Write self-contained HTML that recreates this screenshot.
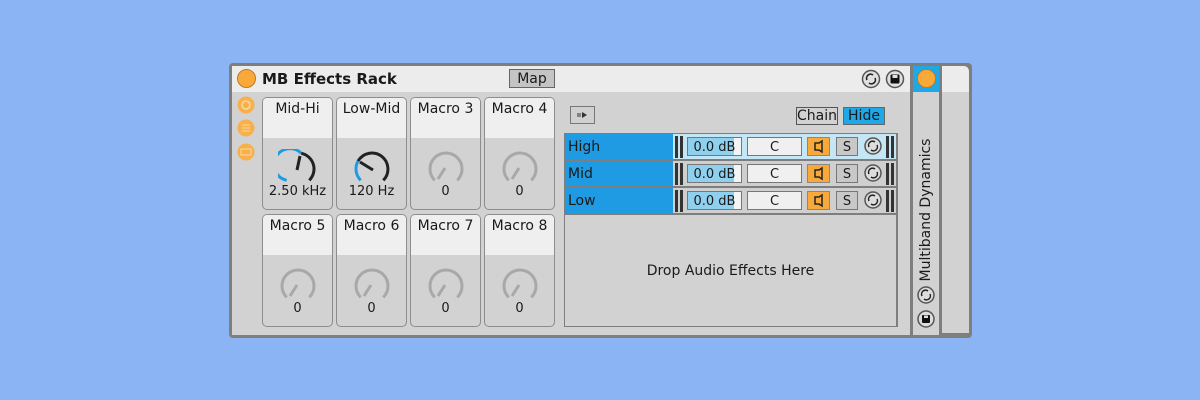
<!DOCTYPE html>
<html><head><meta charset="utf-8"><style>
*{margin:0;padding:0;box-sizing:border-box}
body{width:1200px;height:400px;background:#8ab4f3;position:relative;overflow:hidden;font-family:"DejaVu Sans","Liberation Sans",sans-serif;color:#1a1a1a}
.a{position:absolute}
.card{position:absolute;width:71px;height:113px;border:1.5px solid #8d8d8d;border-radius:5px;background:#d2d2d2;overflow:hidden}
.card .t{height:40px;background:#efefef;text-align:center;font-size:14px;padding-top:3px}
.card svg{position:absolute;left:15px;top:51px}
.card .v{position:absolute;left:0;right:0;top:86px;text-align:center;font-size:13px}
.row{position:absolute;left:565px;width:331px;height:25px}
.nm{position:absolute;left:0;top:0;width:108px;height:25px;background:#1e9be2;font-size:14px;padding:5px 0 0 3px}
.bars{position:absolute;top:2px;width:8px;height:22px;border-left:3px solid #333;border-right:3px solid #333}
.db{position:absolute;left:122px;top:3px;width:55px;height:19px;border:1px solid #777;background:linear-gradient(90deg,#8fd0ef 0 46px,#f4f4f4 46px);font-size:13px;text-align:center;line-height:19px}
.c{position:absolute;left:182px;top:3px;width:55px;height:19px;border:1px solid #777;background:#f0f0f0;font-size:13px;text-align:center;line-height:19px}
.sp{position:absolute;left:242px;top:3px;width:23px;height:19px;background:#f8a93a;border:1px solid #888}
.s{position:absolute;left:271px;top:3px;width:22px;height:19px;background:#c8c8c8;border:1px solid #777;font-size:13px;text-align:center;line-height:19px}
.rf{position:absolute;left:299px;top:3px}
</style></head><body>
<div class="a" style="left:229px;top:63px;width:743px;height:275px;background:#7e7e7e;border-radius:4px"></div>
<div class="a" style="left:232px;top:66px;width:678px;height:26px;background:#ececec"></div>
<div class="a" style="left:232px;top:92px;width:678px;height:243px;background:#d2d2d2"></div>
<div class="a" style="left:913px;top:66px;width:26px;height:26px;background:#1fa8e8"></div>
<div class="a" style="left:913px;top:92px;width:26px;height:243px;background:#d2d2d2"></div>
<div class="a" style="left:942px;top:66px;width:27px;height:26px;background:#ececec;border-top-right-radius:5px"></div>
<div class="a" style="left:942px;top:92px;width:27px;height:241px;background:#d2d2d2"></div>
<div class="a" style="left:917px;top:69px;width:19px;height:19px;border-radius:50%;background:#f8a93a;border:1px solid #c07a20"></div>
<div class="a" style="left:237px;top:69px;width:19px;height:19px;border-radius:50%;background:#f8a93a;border:1px solid #c07a20"></div>
<div class="a" style="left:262px;top:70px;font-size:15px;font-weight:bold">MB Effects Rack</div>
<div class="a" style="left:509px;top:69px;width:46px;height:19px;background:#c4c4c4;border:1px solid #666;font-size:14px;text-align:center;line-height:18px">Map</div>
<svg class="a" style="left:861px;top:69px" width="20" height="20"><circle cx="10" cy="10" r="8.5" fill="#e0e0e0" stroke="#555" stroke-width="1.5"/><path d="M6 11a4 4 0 0 1 6-5M14 9a4 4 0 0 1-6 5" fill="none" stroke="#222" stroke-width="1.6"/></svg>
<svg class="a" style="left:885px;top:69px" width="20" height="20"><circle cx="10" cy="10" r="8.5" fill="#e0e0e0" stroke="#555" stroke-width="1.5"/><rect x="5.5" y="5.5" width="9" height="9" rx="1" fill="#111"/><rect x="7.5" y="6" width="5" height="3" fill="#e0e0e0"/></svg>
<svg class="a" style="left:236px;top:95px" width="20" height="68"><circle cx="10" cy="10" r="8.5" fill="#f8b04a"/><circle cx="10" cy="10" r="4" fill="none" stroke="#fcd9a0" stroke-width="1.5"/><circle cx="10" cy="33" r="8.5" fill="#f8b04a"/><path d="M6 30h8M6 33h8M6 36h8" stroke="#fcd9a0"/><circle cx="10" cy="57" r="8.5" fill="#f8b04a"/><rect x="5" y="54" width="10" height="6" fill="none" stroke="#fcd9a0"/></svg>
<div class="card" style="left:262px;top:97px"><div class="t">Mid-Hi</div>
<svg width="40" height="38"><path d="M8.7 31.3A16 16 0 1 1 23.3 4.3" fill="none" stroke="#1e9be2" stroke-width="3"/><path d="M23.3 4.3A16 16 0 0 1 31.3 31.3" fill="none" stroke="#222" stroke-width="3"/><path d="M19 21L22 7" stroke="#222" stroke-width="3"/></svg><div class="v">2.50 kHz</div></div>
<div class="card" style="left:336px;top:97px"><div class="t">Low-Mid</div>
<svg width="40" height="38"><path d="M8.7 31.3A16 16 0 0 1 6.1 12" fill="none" stroke="#1e9be2" stroke-width="3"/><path d="M6.1 12A16 16 0 1 1 31.3 31.3" fill="none" stroke="#222" stroke-width="3"/><path d="M21 21L8 13" stroke="#222" stroke-width="3"/></svg><div class="v">120 Hz</div></div>
<div class="card" style="left:410px;top:97px"><div class="t">Macro 3</div>
<svg width="40" height="38"><path d="M8.7 31.3A16 16 0 1 1 31.3 31.3" fill="none" stroke="#a8a8a8" stroke-width="3"/><path d="M19 19L12 30" stroke="#a8a8a8" stroke-width="3"/></svg><div class="v">0</div></div>
<div class="card" style="left:484px;top:97px"><div class="t">Macro 4</div>
<svg width="40" height="38"><path d="M8.7 31.3A16 16 0 1 1 31.3 31.3" fill="none" stroke="#a8a8a8" stroke-width="3"/><path d="M19 19L12 30" stroke="#a8a8a8" stroke-width="3"/></svg><div class="v">0</div></div>
<div class="card" style="left:262px;top:214px"><div class="t">Macro 5</div>
<svg width="40" height="38"><path d="M8.7 31.3A16 16 0 1 1 31.3 31.3" fill="none" stroke="#a8a8a8" stroke-width="3"/><path d="M19 19L12 30" stroke="#a8a8a8" stroke-width="3"/></svg><div class="v">0</div></div>
<div class="card" style="left:336px;top:214px"><div class="t">Macro 6</div>
<svg width="40" height="38"><path d="M8.7 31.3A16 16 0 1 1 31.3 31.3" fill="none" stroke="#a8a8a8" stroke-width="3"/><path d="M19 19L12 30" stroke="#a8a8a8" stroke-width="3"/></svg><div class="v">0</div></div>
<div class="card" style="left:410px;top:214px"><div class="t">Macro 7</div>
<svg width="40" height="38"><path d="M8.7 31.3A16 16 0 1 1 31.3 31.3" fill="none" stroke="#a8a8a8" stroke-width="3"/><path d="M19 19L12 30" stroke="#a8a8a8" stroke-width="3"/></svg><div class="v">0</div></div>
<div class="card" style="left:484px;top:214px"><div class="t">Macro 8</div>
<svg width="40" height="38"><path d="M8.7 31.3A16 16 0 1 1 31.3 31.3" fill="none" stroke="#a8a8a8" stroke-width="3"/><path d="M19 19L12 30" stroke="#a8a8a8" stroke-width="3"/></svg><div class="v">0</div></div>
<div class="a" style="left:570px;top:106px;width:25px;height:18px;border:1px solid #777;background:#d0d0d0"><svg width="23" height="16"><path d="M7 6v4M9 6v4" stroke="#333"/><path d="M11 5l5 3-5 3z" fill="#333"/></svg></div>
<div class="a" style="left:796px;top:107px;width:42px;height:18px;border:1px solid #555;font-size:14px;text-align:center;line-height:17px">Chain</div>
<div class="a" style="left:843px;top:107px;width:42px;height:18px;background:#1fa8e8;border:1px solid #666;font-size:14px;text-align:center;line-height:17px">Hide</div>
<div class="a" style="left:564px;top:133px;width:334px;height:194px;background:#7e7e7e"></div>
<div class="a" style="left:565px;top:215px;width:331px;height:111px;background:#d2d2d2;font-size:14px;text-align:center;padding-top:48px">Drop Audio Effects Here</div>
<div class="row" style="top:134px;background:#c4e6f5"><div class="nm">High</div><div class="bars" style="left:110px"></div><div class="db">0.0 dB</div><div class="c">C</div><div class="sp"><svg width="21" height="17"><path d="M7 5h4l3-2v11l-3-2H7z" fill="none" stroke="#222" stroke-width="1.5"/></svg></div><div class="s">S</div><svg class="rf" width="20" height="20"><circle cx="9" cy="9" r="8" fill="#ddd" stroke="#555" stroke-width="1.5"/><path d="M5 10a4 4 0 0 1 6-5M13 8a4 4 0 0 1-6 5" fill="none" stroke="#222" stroke-width="1.5"/></svg><div class="bars" style="left:321px"></div></div>
<div class="row" style="top:161px;background:#cfcfcf"><div class="nm">Mid</div><div class="bars" style="left:110px"></div><div class="db">0.0 dB</div><div class="c">C</div><div class="sp"><svg width="21" height="17"><path d="M7 5h4l3-2v11l-3-2H7z" fill="none" stroke="#222" stroke-width="1.5"/></svg></div><div class="s">S</div><svg class="rf" width="20" height="20"><circle cx="9" cy="9" r="8" fill="#ddd" stroke="#555" stroke-width="1.5"/><path d="M5 10a4 4 0 0 1 6-5M13 8a4 4 0 0 1-6 5" fill="none" stroke="#222" stroke-width="1.5"/></svg><div class="bars" style="left:321px"></div></div>
<div class="row" style="top:188px;background:#cfcfcf"><div class="nm">Low</div><div class="bars" style="left:110px"></div><div class="db">0.0 dB</div><div class="c">C</div><div class="sp"><svg width="21" height="17"><path d="M7 5h4l3-2v11l-3-2H7z" fill="none" stroke="#222" stroke-width="1.5"/></svg></div><div class="s">S</div><svg class="rf" width="20" height="20"><circle cx="9" cy="9" r="8" fill="#ddd" stroke="#555" stroke-width="1.5"/><path d="M5 10a4 4 0 0 1 6-5M13 8a4 4 0 0 1-6 5" fill="none" stroke="#222" stroke-width="1.5"/></svg><div class="bars" style="left:321px"></div></div>
<div class="a" style="left:926px;top:210px;width:0;height:0"><div style="position:absolute;transform:translate(-50%,-50%) rotate(-90deg);white-space:nowrap;font-size:14px">Multiband Dynamics</div></div>
<svg class="a" style="left:916px;top:285px" width="20" height="45"><circle cx="10" cy="10" r="8" fill="#ddd" stroke="#555" stroke-width="1.5"/><path d="M6 11a4 4 0 0 1 6-5M14 9a4 4 0 0 1-6 5" fill="none" stroke="#222" stroke-width="1.5"/><circle cx="10" cy="34" r="8" fill="#ddd" stroke="#555" stroke-width="1.5"/><rect x="6" y="30" width="8" height="8" rx="1" fill="#111"/><rect x="8" y="30.5" width="4" height="2.5" fill="#ddd"/></svg>
</body></html>
